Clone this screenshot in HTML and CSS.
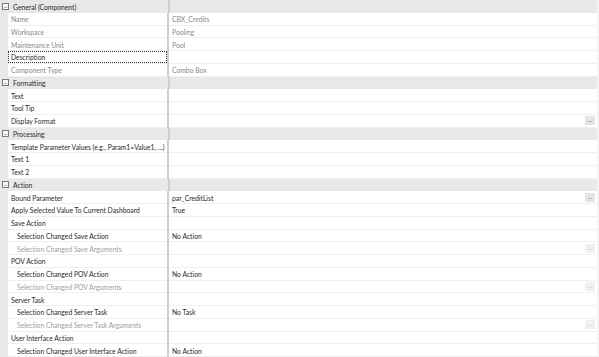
FILE: index.html
```html
<!DOCTYPE html>
<html lang="en">
<head>
    <meta charset="UTF-8">
    <title>Properties</title>
    <link rel="stylesheet" href="styles.css">
</head>
<body>
    <div class="grid">
        <div class="cat"><span class="tog">&minus;</span><span class="cat-name">General (Component)</span><span class="split"></span></div>
        <div class="row ro"><span class="name">Name</span><span class="split"></span><span class="val">CBX_Credits</span></div>
        <div class="row ro"><span class="name">Workspace</span><span class="split"></span><span class="val">Pooling</span></div>
        <div class="row ro"><span class="name">Maintenance Unit</span><span class="split"></span><span class="val">Pool</span></div>
        <div class="row"><span class="name focus">Description</span><span class="split"></span><span class="val"></span></div>
        <div class="row ro"><span class="name">Component Type</span><span class="split"></span><span class="val">Combo Box</span></div>

        <div class="cat"><span class="tog">&minus;</span><span class="cat-name">Formatting</span><span class="split"></span></div>
        <div class="row"><span class="name">Text</span><span class="split"></span><span class="val"></span></div>
        <div class="row"><span class="name">Tool Tip</span><span class="split"></span><span class="val"></span></div>
        <div class="row"><span class="name">Display Format</span><span class="split"></span><span class="val"></span><span class="dots">...</span></div>

        <div class="cat"><span class="tog">&minus;</span><span class="cat-name">Processing</span><span class="split"></span></div>
        <div class="row"><span class="name">Template Parameter Values (e.g., Param1=Value1, &hellip;)</span><span class="split"></span><span class="val"></span></div>
        <div class="row"><span class="name">Text 1</span><span class="split"></span><span class="val"></span></div>
        <div class="row"><span class="name">Text 2</span><span class="split"></span><span class="val"></span></div>

        <div class="cat"><span class="tog">&minus;</span><span class="cat-name">Action</span><span class="split"></span></div>
        <div class="row"><span class="name">Bound Parameter</span><span class="split"></span><span class="val">par_CreditList</span><span class="dots">...</span></div>
        <div class="row"><span class="name">Apply Selected Value To Current Dashboard</span><span class="split"></span><span class="val">True</span></div>
        <div class="row"><span class="name">Save Action</span><span class="split"></span><span class="val"></span></div>
        <div class="row sub"><span class="name">Selection Changed Save Action</span><span class="split"></span><span class="val">No Action</span></div>
        <div class="row sub off"><span class="name">Selection Changed Save Arguments</span><span class="split"></span><span class="val"></span><span class="dots">...</span></div>
        <div class="row"><span class="name">POV Action</span><span class="split"></span><span class="val"></span></div>
        <div class="row sub"><span class="name">Selection Changed POV Action</span><span class="split"></span><span class="val">No Action</span></div>
        <div class="row sub off"><span class="name">Selection Changed POV Arguments</span><span class="split"></span><span class="val"></span><span class="dots">...</span></div>
        <div class="row"><span class="name">Server Task</span><span class="split"></span><span class="val"></span></div>
        <div class="row sub"><span class="name">Selection Changed Server Task</span><span class="split"></span><span class="val">No Task</span></div>
        <div class="row sub off"><span class="name">Selection Changed Server Task Arguments</span><span class="split"></span><span class="val"></span><span class="dots">...</span></div>
        <div class="row"><span class="name">User Interface Action</span><span class="split"></span><span class="val"></span></div>
        <div class="row sub"><span class="name">Selection Changed User Interface Action</span><span class="split"></span><span class="val">No Action</span></div>
        <div class="row sub off"><span class="name"></span><span class="split"></span><span class="val"></span><span class="dots"></span></div>
    </div>
</body>
</html>
```

FILE: styles.css
```css
body {
    margin: 0;
    background: #f4f4f4;
    font-family: Lato, "Noto Sans", sans-serif;
    font-size: 6.8px;
    letter-spacing: -0.02px;
    color: #2b2b2b;
    overflow: hidden;
    height: 357px;
}

.grid {
    width: 597px;
    background: #e9e9e9;
}

.cat,
.row {
    height: 12.75px;
    box-sizing: border-box;
    display: flex;
    align-items: center;
}

.cat {
    background: #e8e8e8;
}

.tog {
    width: 5px;
    height: 5px;
    margin: 0 4px 0 2px;
    border: 1px solid #7a7a7a;
    box-sizing: content-box;
    font-size: 6px;
    line-height: 5px;
    text-align: center;
    color: #444;
    background: #f8f8f8;
    flex: none;
}

.cat-name {
    width: 155px;
    flex: none;
    padding-top: 1px;
}

.row {
    margin-left: 8px;
    background: #fff;
    border-bottom: 1px solid #efefef;
}

.name {
    width: 159px;
    padding: 1px 0 0 3px;
    box-sizing: border-box;
    flex: none;
    white-space: nowrap;
    overflow: hidden;
    height: 100%;
    display: flex;
    align-items: center;
}

.sub .name {
    padding-left: 9px;
}

.split {
    width: 2px;
    height: 12.75px;
    background: #cfcfcf;
    flex: none;
    margin-right: 3px;
    align-self: flex-start;
}

.val {
    flex: 1;
    white-space: nowrap;
    padding-top: 1px;
}

.ro .name,
.ro .val {
    color: #8a8a8a;
}

.off .name {
    color: #a0a0a0;
}

.focus {
    outline: 1px dotted #333;
    outline-offset: -1px;
}

.dots {
    width: 10px;
    height: 9px;
    margin-right: 2px;
    background: #e4e4e4;
    font-size: 6px;
    line-height: 7px;
    text-align: center;
    color: #555;
    flex: none;
}

.off .dots {
    background: #f0f0f0;
    color: #bbb;
}
```
